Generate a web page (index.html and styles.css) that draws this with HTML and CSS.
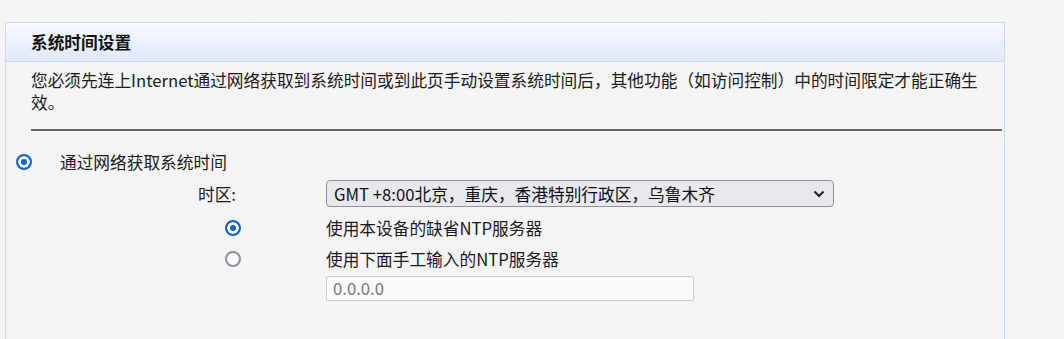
FILE: index.html
```html
<!DOCTYPE html>
<html>
<head>
    <meta charset="UTF-8">
    <meta name="viewport" content="width=device-width, initial-scale=1.0">
    <title>系统时间设置</title>
    <link rel="stylesheet" href="styles.css">
</head>
<body>
    <div class="panel">
        <div class="panel-title">系统时间设置</div>
        <div class="panel-body">
            <p class="tip">您必须先连上Internet通过网络获取到系统时间或到此页手动设置系统时间后，其他功能（如访问控制）中的时间限定才能正确生效。</p>
            <hr class="divider">

            <div class="form">
                <div class="row row-main">
                    <input type="radio" name="mode" class="radio" checked>
                    <span class="main-label">通过网络获取系统时间</span>
                </div>

                <div class="row row-select">
                    <div class="cell-label">时区:</div>
                    <div class="cell-field">
                        <select class="select">
                            <option>GMT +8:00北京，重庆，香港特别行政区，乌鲁木齐</option>
                        </select>
                    </div>
                </div>

                <div class="row row-ntp1">
                    <div class="cell-label"><input type="radio" name="ntp" class="radio" checked></div>
                    <div class="cell-field">使用本设备的缺省NTP服务器</div>
                </div>

                <div class="row row-ntp2">
                    <div class="cell-label"><input type="radio" name="ntp" class="radio"></div>
                    <div class="cell-field">使用下面手工输入的NTP服务器</div>
                </div>

                <div class="row row-input">
                    <div class="cell-label"></div>
                    <div class="cell-field">
                        <input type="text" class="text-input" value="0.0.0.0">
                    </div>
                </div>
            </div>
        </div>
    </div>
</body>
</html>
```

FILE: styles.css
```css
* {
    margin: 0;
    padding: 0;
    box-sizing: border-box;
}

body {
    font-family: "Noto Sans CJK SC", "Noto Sans", sans-serif;
    font-size: 16.7px;
    color: #1a1a1a;
    background: #f4f4f4;
    padding: 22px 0 0 5px;
    overflow: hidden;
}

.panel {
    width: 1000px;
    height: 317px;
    border: 1px solid #c4dbf2;
    border-bottom: none;
    background: #f4f4f4;
}

.panel-title {
    height: 39px;
    line-height: 38px;
    padding-left: 25px;
    font-weight: bold;
    color: #111;
    background: linear-gradient(to bottom, #f7faff, #dde9f8);
    border-bottom: 1px solid #c4dbf2;
}

.panel-body {
    padding: 7px 2px 0 10px;
}

.tip {
    padding-left: 15px;
    padding-right: 10px;
    line-height: 22px;
}

.divider {
    margin: 16px 0 0 15px;
    border: none;
    height: 2px;
    background: #666;
}

.form {
    padding-top: 16px;
}

.row {
    display: flex;
    align-items: center;
}

.row-main {
    height: 29px;
}

.row-select {
    height: 35px;
}

.row-ntp1 {
    height: 34px;
}

.row-ntp2 {
    height: 28px;
}

.row-input {
    height: 30px;
}

.main-label {
    margin-left: 28px;
}

.cell-label {
    width: 225px;
    flex: none;
    display: flex;
    justify-content: flex-end;
    align-items: center;
}

.row-select .cell-label {
    padding-right: 5px;
}

.cell-field {
    margin-left: 85px;
}

.radio {
    appearance: none;
    -webkit-appearance: none;
    width: 16px;
    height: 16px;
    border: 2px solid #8f8f9d;
    border-radius: 50%;
    background: #fff;
    flex: none;
}

.radio:checked {
    border-color: #0b63d8;
    background: #0b63d8;
    box-shadow: inset 0 0 0 3px #fff;
}

.select {
    appearance: none;
    -webkit-appearance: none;
    width: 508px;
    height: 27px;
    padding: 0 30px 0 7px;
    font-family: inherit;
    font-size: 16.7px;
    color: #111;
    background-color: #e9e9ed;
    background-image: url("data:image/svg+xml,%3Csvg xmlns='http://www.w3.org/2000/svg' width='12' height='8' viewBox='0 0 12 8'%3E%3Cpath d='M1.5 1.5 6 6l4.5-4.5' fill='none' stroke='%23222' stroke-width='2'/%3E%3C/svg%3E");
    background-repeat: no-repeat;
    background-position: right 8px center;
    border: 1px solid #8f8f9d;
    border-radius: 4px;
}

.text-input {
    width: 368px;
    height: 25px;
    padding: 0 6px;
    font-family: inherit;
    font-size: 16.7px;
    color: #777;
    background: #fafafa;
    border: 1px solid #c6c6cc;
    border-radius: 2px;
}
```
